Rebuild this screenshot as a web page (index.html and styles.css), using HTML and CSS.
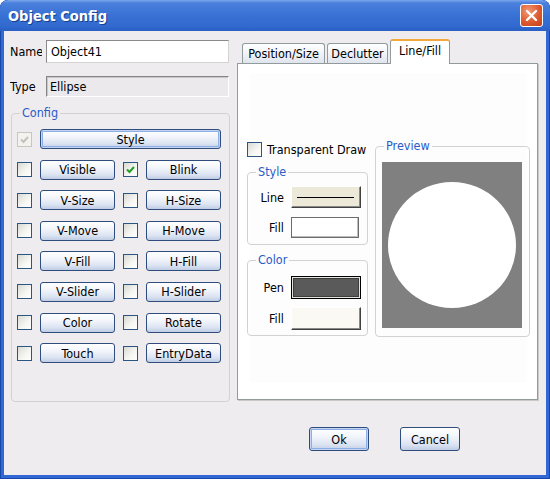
FILE: index.html
```html
<!DOCTYPE html>
<html lang="en">
<head>
  <meta charset="UTF-8" />
  <title>Object Config</title>
  <link rel="stylesheet" href="styles.css">
</head>
<body>
  <div class="window">
    <div class="title-bar">
      <span class="title">Object Config</span>
      <span class="close-btn">
        <svg width="13" height="13" viewBox="0 0 13 13"><path d="M2 2 L11 11 M11 2 L2 11" stroke="#fff" stroke-width="2.4" stroke-linecap="round"/></svg>
      </span>
    </div>

    <div class="client">
      <div class="main">
        <!-- left side: name / type / config toggles -->
        <div class="left-col">
          <div class="field-row">
            <label class="field-label">Name</label>
            <div class="text-box">Object41</div>
          </div>
          <div class="field-row type-row">
            <label class="field-label">Type</label>
            <div class="text-box read-only">Ellipse</div>
          </div>

          <fieldset class="group config-group">
            <legend>Config</legend>
            <div class="cfg-grid">
              <span class="chk disabled"><svg width="11" height="11" viewBox="0 0 11 11"><path d="M2 5.5 L4.5 8 L9 3" fill="none" stroke="#c4c2b8" stroke-width="2"/></svg></span>
              <button class="btn default wide">Style</button>

              <span class="chk"></span><button class="btn">Visible</button>
              <span class="chk"><svg width="11" height="11" viewBox="0 0 11 11"><path d="M2 5.5 L4.5 8 L9 3" fill="none" stroke="#21a121" stroke-width="2"/></svg></span><button class="btn">Blink</button>

              <span class="chk"></span><button class="btn">V-Size</button>
              <span class="chk"></span><button class="btn">H-Size</button>

              <span class="chk"></span><button class="btn">V-Move</button>
              <span class="chk"></span><button class="btn">H-Move</button>

              <span class="chk"></span><button class="btn">V-Fill</button>
              <span class="chk"></span><button class="btn">H-Fill</button>

              <span class="chk"></span><button class="btn">V-Slider</button>
              <span class="chk"></span><button class="btn">H-Slider</button>

              <span class="chk"></span><button class="btn">Color</button>
              <span class="chk"></span><button class="btn">Rotate</button>

              <span class="chk"></span><button class="btn">Touch</button>
              <span class="chk"></span><button class="btn">EntryData</button>
            </div>
          </fieldset>
        </div>

        <!-- right side: tabs -->
        <div class="right-col">
          <div class="tabs">
            <div class="tab tab-pos">Position/Size</div>
            <div class="tab tab-declutter">Declutter</div>
            <div class="tab tab-line active">Line/Fill</div>
          </div>
          <div class="tab-panel">
            <div class="panel-body">
              <div class="draw-col">
                <div class="chk-row"><span class="chk"></span>Transparent Draw</div>

                <fieldset class="group small-group style-group">
                  <legend>Style</legend>
                  <div class="swatch-grid">
                    <span class="swatch-label">Line</span>
                    <span class="swatch raised line-swatch"><span class="line"></span></span>
                    <span class="swatch-label">Fill</span>
                    <span class="swatch framed fill-swatch"></span>
                  </div>
                </fieldset>

                <fieldset class="group small-group color-group">
                  <legend>Color</legend>
                  <div class="swatch-grid color-grid">
                    <span class="swatch-label">Pen</span>
                    <span class="swatch pen-swatch"></span>
                    <span class="swatch-label">Fill</span>
                    <span class="swatch raised color-fill"></span>
                  </div>
                </fieldset>
              </div>

              <fieldset class="group preview-group">
                <legend>Preview</legend>
                <div class="preview">
                  <svg width="140" height="166" viewBox="0 0 140 166"><ellipse cx="70" cy="83" rx="64" ry="63" fill="#fff"/></svg>
                </div>
              </fieldset>
            </div>
          </div>
        </div>
      </div>

      <div class="footer">
        <button class="btn default dlg-btn">Ok</button>
        <button class="btn dlg-btn">Cancel</button>
      </div>
    </div>
  </div>
</body>
</html>
```

FILE: styles.css
```css
* { box-sizing: border-box; }
body {
  margin: 0;
  font-family: "DejaVu Sans Condensed", "DejaVu Sans", sans-serif;
  font-stretch: condensed;
  font-size: 12.5px;
  color: #000;
  background: #fff;
}

/* window frame */
.window {
  width: 550px;
  height: 479px;
  display: flex;
  flex-direction: column;
  background: #3168d6;
  border-radius: 8px 8px 0 0;
  box-shadow: inset 0 0 0 1px #1a47aa;
  overflow: hidden;
}
.title-bar {
  height: 31px;
  display: flex;
  align-items: center;
  justify-content: space-between;
  padding: 0 7px 0 8px;
  border-radius: 8px 8px 0 0;
  background: linear-gradient(to bottom, #7aa6ec 0%, #4a80dc 10%, #3a73d5 45%, #3169cf 85%, #2a5fc4 100%);
}
.title {
  color: #fff;
  font-weight: bold;
  font-size: 14.5px;
  text-shadow: 1px 1px 0 #17408f;
}
.close-btn {
  width: 23px;
  height: 23px;
  border: 1px solid #fff;
  border-radius: 3px;
  background: radial-gradient(circle at 35% 30%, #f29a74, #dd5a30 55%, #c23f1a);
  display: flex;
  align-items: center;
  justify-content: center;
}

.client {
  flex: 1;
  margin: 0 4px 4px;
  background: #efecef;
  display: flex;
  flex-direction: column;
}
.main {
  display: flex;
  align-items: flex-start;
  gap: 7px;
  padding: 8px 0 0 6px;
}

/* left column */
.left-col {
  width: 220px;
  padding-top: 1px;
}
.field-row {
  display: flex;
  align-items: center;
  height: 23px;
}
.type-row {
  height: 21px;
  margin-top: 13px;
}
.field-label {
  width: 32px;
  margin-right: 4px;
  overflow: hidden;
  white-space: nowrap;
}
.text-box {
  width: 183px;
  height: 100%;
  display: flex;
  align-items: center;
  padding: 0 4px;
  background: #fff;
  border: 1px solid;
  border-color: #8a8a8a #d4d4d4 #d4d4d4 #8a8a8a;
}
.text-box.read-only {
  padding-left: 3px;
  background: #ebe9eb;
  border-color: #858585 #fff #fff #858585;
  box-shadow: inset 1px 1px 0 #c9c7c9;
}

/* group boxes */
.group {
  margin: 0;
  padding: 0;
  min-width: 0;
  border: 1px solid #d4d1d2;
  border-radius: 4px;
}
.group legend {
  margin-left: 8px;
  padding: 0 2px;
  line-height: 14px;
  color: #2a5bc9;
}
.config-group { margin: 9px 0 0 1px; }
.cfg-grid {
  display: grid;
  grid-template-columns: 15px 75px 15px 75px;
  grid-auto-rows: 20px;
  column-gap: 8px;
  row-gap: 10.6px;
  align-items: center;
  padding: 9px 0 38px 5px;
}
.wide { grid-column: 2 / 5; }

.chk {
  width: 15px;
  height: 15px;
  display: flex;
  align-items: center;
  justify-content: center;
  border: 1px solid #2b5582;
  background: linear-gradient(135deg, #d9d9d4, #f6f6f3 60%, #fff);
}
.chk.disabled {
  border-color: #c8c6bd;
  background: #f3f2ef;
}

.btn {
  font: inherit;
  height: 20px;
  padding: 0;
  color: #000;
  border: 1px solid #2f4d7c;
  border-radius: 3px;
  background: linear-gradient(to bottom, #fff 0%, #f4f6fb 35%, #dce4f2 75%, #bfcce4 100%);
}
.btn.default {
  box-shadow: inset 0 0 0 1px #c4d5f4, inset 0 0 0 2px #8eaee6;
}

/* tabs */
.right-col { width: 301px; }
.tabs {
  height: 24px;
  display: flex;
  align-items: flex-end;
  gap: 2px;
  padding-left: 5px;
}
.tab {
  height: 20px;
  display: flex;
  align-items: center;
  justify-content: center;
  border: 1px solid #919b9c;
  border-bottom: none;
  border-radius: 3px 3px 0 0;
  background: linear-gradient(to bottom, #fff, #f1f3f7 50%, #dfe5ee);
}
.tab-pos { width: 83px; }
.tab-declutter { width: 61px; }
.tab-line { width: 60px; }
.tab.active {
  position: relative;
  z-index: 1;
  height: 25px;
  margin-bottom: -1px;
  padding-bottom: 4px;
  background: #fff;
  border-top: 2px solid #f3a83d;
}
.tab-panel {
  height: 337px;
  padding: 75px 0 0 9px;
  border: 1px solid #919b9c;
  background: linear-gradient(#fdfdfd, #fdfdfd) 12px 9px / 277px 310px no-repeat, #fff;
  box-shadow: 1px 1px 0 #c9c9c6;
}
.panel-body {
  display: flex;
  align-items: flex-start;
  gap: 7px;
}
.draw-col {
  width: 121px;
  padding-top: 3px;
}
.chk-row {
  height: 15px;
  display: flex;
  align-items: center;
  gap: 5px;
  white-space: nowrap;
}
.style-group { margin-top: 8px; }
.color-group { margin-top: 8px; }

.swatch-grid {
  display: grid;
  grid-template-columns: 1fr 70px;
  grid-template-rows: 22px 21px;
  column-gap: 7px;
  row-gap: 9px;
  align-items: center;
  padding: 7px 6px 6px 0;
}
.color-grid {
  grid-template-rows: 23px 23px;
  row-gap: 8px;
  padding: 9px 6px 5px 0;
}
.swatch-label { text-align: right; }
.swatch {
  height: 100%;
  display: flex;
  align-items: center;
}
.raised {
  border: 1px solid;
  border-color: #fff #404040 #404040 #fff;
  box-shadow: inset -1px -1px 0 #8a8a8a;
}
.line-swatch { background: #ece9d8; padding: 0 6px 0 5px; }
.line-swatch .line {
  flex: 1;
  height: 1px;
  background: #000;
}
.framed {
  border: 1px solid #6c6c6c;
  box-shadow: inset -1px -1px 0 #bdbdbd;
}
.fill-swatch {
  width: 68px;
  background: #fff;
}
.pen-swatch {
  border: 1px solid #000;
  background: #5a5a5a;
  box-shadow: inset 0 0 0 1px #e4e3dc, inset 0 0 0 2px #3c3c3c;
}
.color-fill { background: #faf9f4; }

.preview-group { width: 155px; }
.preview {
  height: 166px;
  margin: 9px 7px 8px 6px;
  background: #808080;
}
.preview svg { display: block; }

/* dialog buttons */
.footer {
  display: flex;
  justify-content: flex-end;
  gap: 31px;
  padding: 25px 86px 0 0;
}
.dlg-btn {
  width: 60px;
  height: 24px;
}
```
